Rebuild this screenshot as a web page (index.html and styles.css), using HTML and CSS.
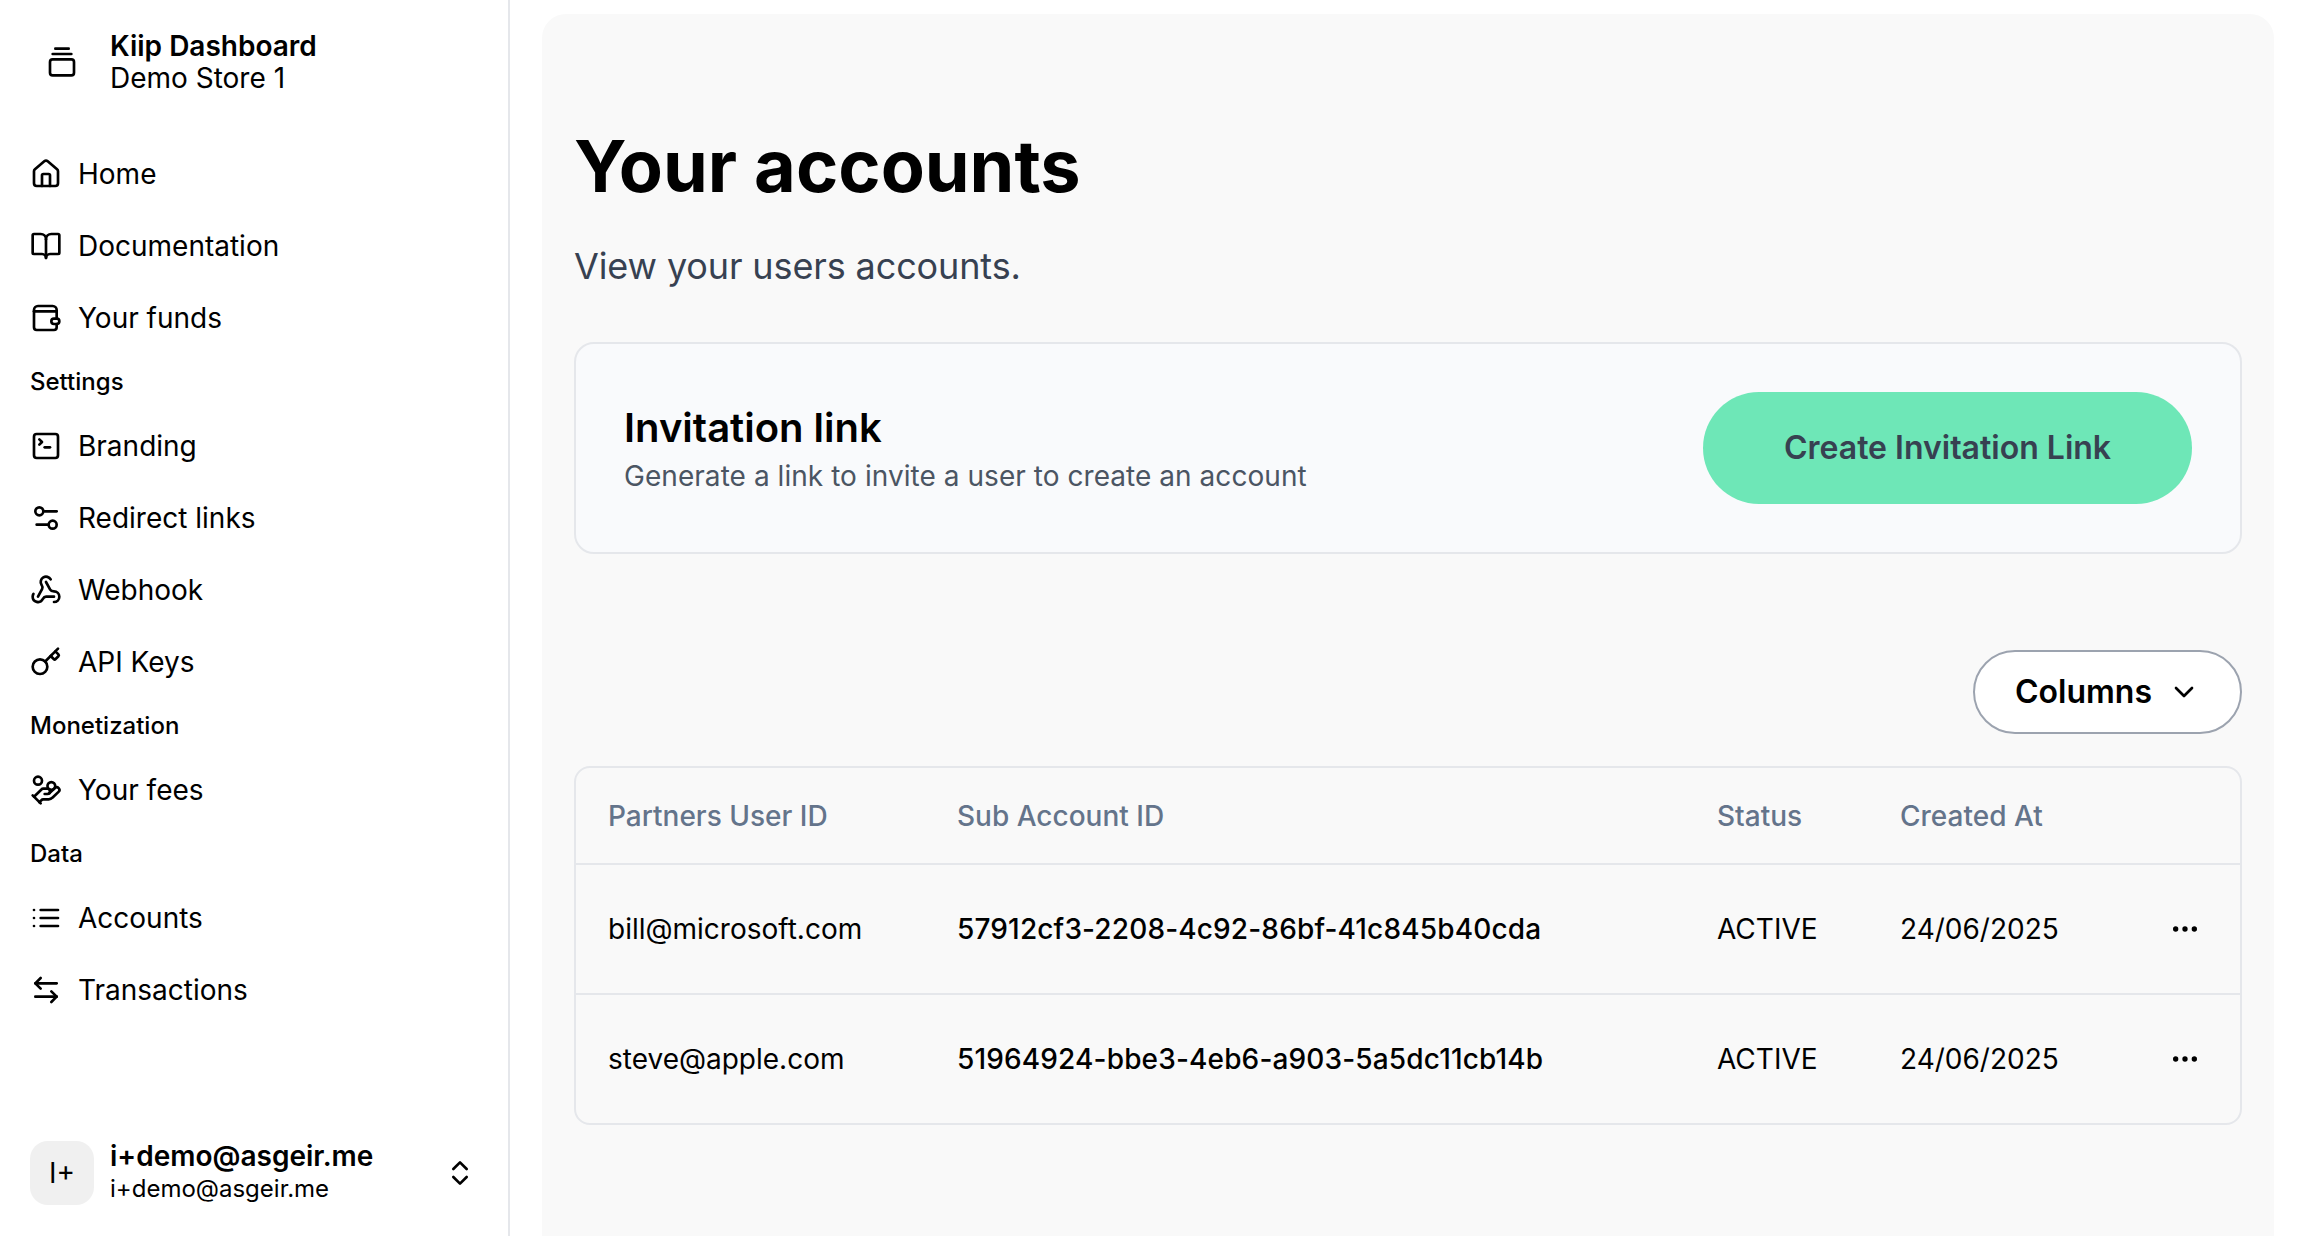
FILE: index.html
```html
<!DOCTYPE html>
<html lang="en">
<head>
    <meta charset="UTF-8">
    <meta name="viewport" content="width=device-width, initial-scale=1.0">
    <title>Your accounts</title>
    <link rel="stylesheet" href="styles.css">
</head>
<body>
    <div class="layout">
        <!-- Sidebar -->
        <aside class="sidebar">
            <div class="brand">
                <div class="brand-icon">
                    <svg class="icon" viewBox="0 0 24 24"><path d="M7 2h10"/><path d="M5 6h14"/><rect width="18" height="12" x="3" y="10" rx="2"/></svg>
                </div>
                <div class="stack">
                    <strong>Kiip Dashboard</strong>
                    <span>Demo Store 1</span>
                </div>
            </div>

            <nav class="nav">
                <a class="nav-item">
                    <svg class="icon" viewBox="0 0 24 24"><path d="M15 21v-8a1 1 0 0 0-1-1h-4a1 1 0 0 0-1 1v8"/><path d="M3 10a2 2 0 0 1 .709-1.528l7-5.999a2 2 0 0 1 2.582 0l7 5.999A2 2 0 0 1 21 10v9a2 2 0 0 1-2 2H5a2 2 0 0 1-2-2z"/></svg>
                    Home
                </a>
                <a class="nav-item">
                    <svg class="icon" viewBox="0 0 24 24"><path d="M12 7v14"/><path d="M3 18a1 1 0 0 1-1-1V4a1 1 0 0 1 1-1h5a4 4 0 0 1 4 4 4 4 0 0 1 4-4h5a1 1 0 0 1 1 1v13a1 1 0 0 1-1 1h-6a3 3 0 0 0-3 3 3 3 0 0 0-3-3z"/></svg>
                    Documentation
                </a>
                <a class="nav-item">
                    <svg class="icon" viewBox="0 0 24 24"><path d="M20 12.5V6a3 3 0 0 0-3-3H6a3 3 0 0 0-3 3v13a2 2 0 0 0 2 2h13a2 2 0 0 0 2-2v-2.5"/><path d="M3 7h17"/><rect width="6" height="4" x="16" y="12.5" rx="2"/></svg>
                    Your funds
                </a>

                <div class="nav-label">Settings</div>
                <a class="nav-item">
                    <svg class="icon" viewBox="0 0 24 24"><path d="m7 11 2-2-2-2"/><path d="M11 13h4"/><rect width="18" height="18" x="3" y="3" rx="2"/></svg>
                    Branding
                </a>
                <a class="nav-item">
                    <svg class="icon" viewBox="0 0 24 24"><path d="M20 7h-9"/><path d="M14 17H5"/><circle cx="17" cy="17" r="3"/><circle cx="7" cy="7" r="3"/></svg>
                    Redirect links
                </a>
                <a class="nav-item">
                    <svg class="icon" viewBox="0 0 24 24"><path d="M18 16.98h-5.99c-1.1 0-1.95.94-2.48 1.9A4 4 0 0 1 2 17c.01-.7.2-1.4.57-2"/><path d="m6 17 3.13-5.78c.53-.97.1-2.18-.5-3.1a4 4 0 1 1 6.89-4.06"/><path d="m12 6 3.13 5.73C15.66 12.7 16.9 13 18 13a4 4 0 0 1 0 8"/></svg>
                    Webhook
                </a>
                <a class="nav-item">
                    <svg class="icon" viewBox="0 0 24 24"><path d="m15.5 7.5 2.3 2.3a1 1 0 0 0 1.4 0l2.1-2.1a1 1 0 0 0 0-1.4L19 4"/><path d="m21 2-9.6 9.6"/><circle cx="7.5" cy="15.5" r="5.5"/></svg>
                    API Keys
                </a>

                <div class="nav-label">Monetization</div>
                <a class="nav-item">
                    <svg class="icon" viewBox="0 0 24 24"><path d="M11 15h2a2 2 0 1 0 0-4h-3c-.6 0-1.1.2-1.4.6L3 17"/><path d="m7 21 1.6-1.4c.3-.4.8-.6 1.4-.6h4c1.1 0 2.1-.4 2.8-1.2l4.6-4.4a2 2 0 0 0-2.75-2.91l-4.2 3.9"/><path d="m2 16 6 6"/><circle cx="16" cy="9" r="2.9"/><circle cx="6" cy="5" r="3"/></svg>
                    Your fees
                </a>

                <div class="nav-label">Data</div>
                <a class="nav-item">
                    <svg class="icon" viewBox="0 0 24 24"><path d="M3 12h.01"/><path d="M3 18h.01"/><path d="M3 6h.01"/><path d="M8 12h13"/><path d="M8 18h13"/><path d="M8 6h13"/></svg>
                    Accounts
                </a>
                <a class="nav-item">
                    <svg class="icon" viewBox="0 0 24 24"><path d="M8 3 4 7l4 4"/><path d="M4 7h16"/><path d="m16 21 4-4-4-4"/><path d="M20 17H4"/></svg>
                    Transactions
                </a>
            </nav>

            <div class="user">
                <div class="avatar">I+</div>
                <div class="stack user-text">
                    <strong>i+demo@asgeir.me</strong>
                    <span class="user-email">i+demo@asgeir.me</span>
                </div>
                <svg class="icon" viewBox="0 0 24 24"><path d="m7 15 5 5 5-5"/><path d="m7 9 5-5 5 5"/></svg>
            </div>
        </aside>

        <!-- Main content -->
        <main class="main">
            <h1>Your accounts</h1>
            <p class="subtitle">View your users accounts.</p>

            <section class="invite-card">
                <div class="invite-text">
                    <h2>Invitation link</h2>
                    <p>Generate a link to invite a user to create an account</p>
                </div>
                <button class="btn-create">Create Invitation Link</button>
            </section>

            <div class="toolbar">
                <button class="btn-columns">
                    Columns
                    <svg class="icon" viewBox="0 0 24 24"><path d="m6 9 6 6 6-6"/></svg>
                </button>
            </div>

            <div class="table-wrap">
                <table class="accounts">
                    <colgroup>
                        <col class="col-user">
                        <col class="col-sub">
                        <col class="col-status">
                        <col class="col-created">
                        <col>
                    </colgroup>
                    <thead>
                        <tr>
                            <th>Partners User ID</th>
                            <th>Sub Account ID</th>
                            <th>Status</th>
                            <th>Created At</th>
                            <th></th>
                        </tr>
                    </thead>
                    <tbody>
                        <tr>
                            <td>bill@microsoft.com</td>
                            <td class="sub-id">57912cf3-2208-4c92-86bf-41c845b40cda</td>
                            <td>ACTIVE</td>
                            <td>24/06/2025</td>
                            <td class="row-menu"><svg class="icon" viewBox="0 0 24 24"><circle cx="12" cy="12" r="1"/><circle cx="19" cy="12" r="1"/><circle cx="5" cy="12" r="1"/></svg></td>
                        </tr>
                        <tr>
                            <td>steve@apple.com</td>
                            <td class="sub-id">51964924-bbe3-4eb6-a903-5a5dc11cb14b</td>
                            <td>ACTIVE</td>
                            <td>24/06/2025</td>
                            <td class="row-menu"><svg class="icon" viewBox="0 0 24 24"><circle cx="12" cy="12" r="1"/><circle cx="19" cy="12" r="1"/><circle cx="5" cy="12" r="1"/></svg></td>
                        </tr>
                    </tbody>
                </table>
            </div>
        </main>
    </div>
</body>
</html>
```

FILE: styles.css
```css
/* Reset and base styles */
* {
    box-sizing: border-box;
    margin: 0;
    padding: 0;
}

body {
    font-family: Inter, "Liberation Sans", sans-serif;
    font-size: 28px;
    line-height: 32px;
    color: #000;
    background-color: #fff;
    overflow: hidden;
}

.icon {
    width: 32px;
    height: 32px;
    flex-shrink: 0;
    fill: none;
    stroke: currentColor;
    stroke-width: 2;
    stroke-linecap: round;
    stroke-linejoin: round;
}

.layout {
    display: flex;
    height: 1236px;
}

/* Sidebar */
.sidebar {
    width: 510px;
    flex-shrink: 0;
    display: flex;
    flex-direction: column;
    padding: 30px 32px 30px 30px;
    border-right: 2px solid #e5e7eb;
}

.brand {
    display: flex;
    align-items: center;
    gap: 16px;
    margin-bottom: 44px;
}

.brand-icon {
    width: 64px;
    height: 64px;
    display: flex;
    align-items: center;
    justify-content: center;
}

.stack {
    display: flex;
    flex-direction: column;
}

.stack strong {
    font-weight: 600;
}

.nav {
    display: flex;
    flex-direction: column;
}

.nav-item {
    height: 72px;
    display: flex;
    align-items: center;
    gap: 16px;
}

.nav-label {
    height: 56px;
    display: flex;
    align-items: center;
    font-size: 24px;
    font-weight: 500;
}

.user {
    margin-top: auto;
    display: flex;
    align-items: center;
    gap: 16px;
}

.avatar {
    width: 64px;
    height: 64px;
    flex-shrink: 0;
    display: flex;
    align-items: center;
    justify-content: center;
    background-color: #f0f0f0;
    border-radius: 18px;
}

.user-text {
    flex: 1;
}

.user-email {
    font-size: 24px;
    line-height: 34px;
}

/* Main content */
.main {
    flex: 1;
    margin: 14px 28px 0 32px;
    padding: 112px 32px 0;
    background-color: #f9f9f9;
    border-radius: 24px 24px 0 0;
}

h1 {
    font-size: 72px;
    line-height: 80px;
    font-weight: 700;
}

.subtitle {
    margin-top: 32px;
    font-size: 36px;
    line-height: 56px;
    letter-spacing: -0.12px;
    color: #374151;
}

.invite-card {
    margin-top: 48px;
    height: 212px;
    display: flex;
    align-items: center;
    justify-content: space-between;
    padding: 0 48px;
    background-color: #f9fafc;
    border: 2px solid #e5e7eb;
    border-radius: 20px;
}

.invite-text {
    padding-top: 1px;
}

.invite-text h2 {
    font-size: 40px;
    line-height: 44px;
    font-weight: 600;
}

.invite-text p {
    margin-top: 10px;
    letter-spacing: 0.05px;
    color: #4b5563;
}

.btn-create {
    width: 489px;
    height: 112px;
    font: 600 32px/40px Inter, "Liberation Sans", sans-serif;
    color: #374151;
    background-color: #6ee7b7;
    border: none;
    border-radius: 56px;
}

.toolbar {
    display: flex;
    justify-content: flex-end;
    margin-top: 96px;
}

.btn-columns {
    height: 84px;
    display: flex;
    align-items: center;
    gap: 16px;
    padding: 0 40px;
    font: 600 32px/40px Inter, "Liberation Sans", sans-serif;
    color: #000;
    background-color: #fff;
    border: 2px solid #9ca3af;
    border-radius: 42px;
}

/* Accounts table */
.table-wrap {
    margin-top: 32px;
    border: 2px solid #e5e7eb;
    border-radius: 16px;
    overflow: hidden;
}

.accounts {
    width: 100%;
    border-collapse: collapse;
    table-layout: fixed;
}

.col-user {
    width: 349px;
}

.col-sub {
    width: 760px;
}

.col-status {
    width: 183px;
}

.col-created {
    width: 270px;
}

.accounts th,
.accounts td {
    padding: 0 0 0 32px;
    text-align: left;
}

.accounts th {
    height: 96px;
    font-weight: 500;
    color: #64748b;
    border-bottom: 2px solid #e5e7eb;
}

.accounts td {
    height: 130px;
}

.accounts tbody tr + tr td {
    height: 129px;
    border-top: 2px solid #e5e7eb;
}

.sub-id {
    font-weight: 500;
    letter-spacing: 0.15px;
}

.accounts .row-menu {
    padding: 0 0 0 31px;
}

.row-menu .icon {
    display: block;
}
```
